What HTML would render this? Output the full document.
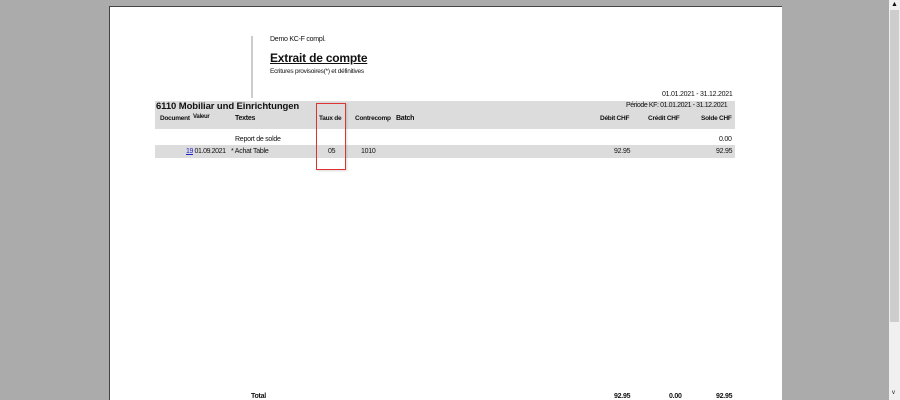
<!DOCTYPE html><html><head><style>
html,body{margin:0;overflow:hidden;width:900px;height:400px}
body{background:#ababab;position:relative;font-family:"Liberation Sans",sans-serif;color:#111}
.a{position:absolute;white-space:nowrap}
#page{position:absolute;left:109px;top:6px;width:672px;height:394px;background:#fff;border-left:1px solid #444;border-top:1px solid #444;border-right:1px solid #444}
.s{font-size:7px;letter-spacing:-0.25px}
.b{font-weight:bold}
</style></head><body>
<div id="page"></div>
<div class="a" style="left:782px;top:0;width:108px;height:400px;background:#ababab"></div>
<div class="a" style="left:889px;top:0;width:11px;height:400px;background:#f0f0f0"></div>
<div class="a" style="left:890px;top:10px;width:9px;height:312px;background:#cdcdcd"></div>
<div class="a" style="left:891px;top:1px;font-size:7px">▲</div>
<div class="a" style="left:892px;top:390px;font-size:6px">v</div>
<div class="a" style="left:251px;top:36px;width:2px;height:62px;background:#ccc"></div>
<div class="a s" style="left:270px;top:36px">Demo KC-F compl.</div>
<div class="a b" style="left:270px;top:51px;font-size:12px;letter-spacing:-0.2px;text-decoration:underline">Extrait de compte</div>
<div class="a s" style="left:270px;top:68px;font-size:6.5px">Ecritures provisoires(*) et définitives</div>
<div class="a s" style="left:662px;top:91px">01.01.2021 - 31.12.2021</div>
<div class="a" style="left:155px;top:101px;width:580px;height:28px;background:#dcdcdc"></div>
<div class="a b" style="left:156px;top:101px;font-size:9.5px;letter-spacing:-0.1px">6110 Mobiliar und Einrichtungen</div>
<div class="a s" style="left:626px;top:102px;letter-spacing:-0.4px">Période KF: 01.01.2021 - 31.12.2021</div>
<div class="a s b" style="left:160px;top:115px;font-size:6.5px">Document</div>
<div class="a s b" style="left:193px;top:114px;font-size:6px">Valeur</div>
<div class="a s b" style="left:235px;top:115px">Textes</div>
<div class="a s b" style="left:319px;top:115px;font-size:6.5px">Taux de</div>
<div class="a s b" style="left:355px;top:115px;font-size:6.5px">Contrecomp</div>
<div class="a s b" style="left:396px;top:115px">Batch</div>
<div class="a s b" style="left:600px;top:115px;font-size:6.5px">Débit CHF</div>
<div class="a s b" style="left:648px;top:115px;font-size:6.5px">Crédit CHF</div>
<div class="a s b" style="left:701px;top:115px;font-size:6.5px">Solde CHF</div>
<div class="a s" style="left:235px;top:136px">Report de solde</div>
<div class="a s" style="left:719px;top:136px">0.00</div>
<div class="a" style="left:155px;top:145px;width:580px;height:13px;background:#dcdcdc"></div>
<div class="a s" style="left:186px;top:148px;letter-spacing:-0.4px"><span style="color:#22c;text-decoration:underline">19</span> 01.09.2021</div>
<div class="a s" style="left:231px;top:148px">* Achat Table</div>
<div class="a s" style="left:328px;top:148px">05</div>
<div class="a s" style="left:361px;top:148px">1010</div>
<div class="a s" style="left:614px;top:148px">92.95</div>
<div class="a s" style="left:716px;top:148px">92.95</div>
<div class="a" style="left:316px;top:103px;width:28px;height:65px;border:1px solid #d33;box-shadow:1px 1px 2px rgba(0,0,0,.15)"></div>
<div class="a s b" style="left:251px;top:393px">Total</div>
<div class="a s b" style="left:614px;top:393px">92.95</div>
<div class="a s b" style="left:669px;top:393px">0.00</div>
<div class="a s b" style="left:716px;top:393px">92.95</div>
</body></html>
